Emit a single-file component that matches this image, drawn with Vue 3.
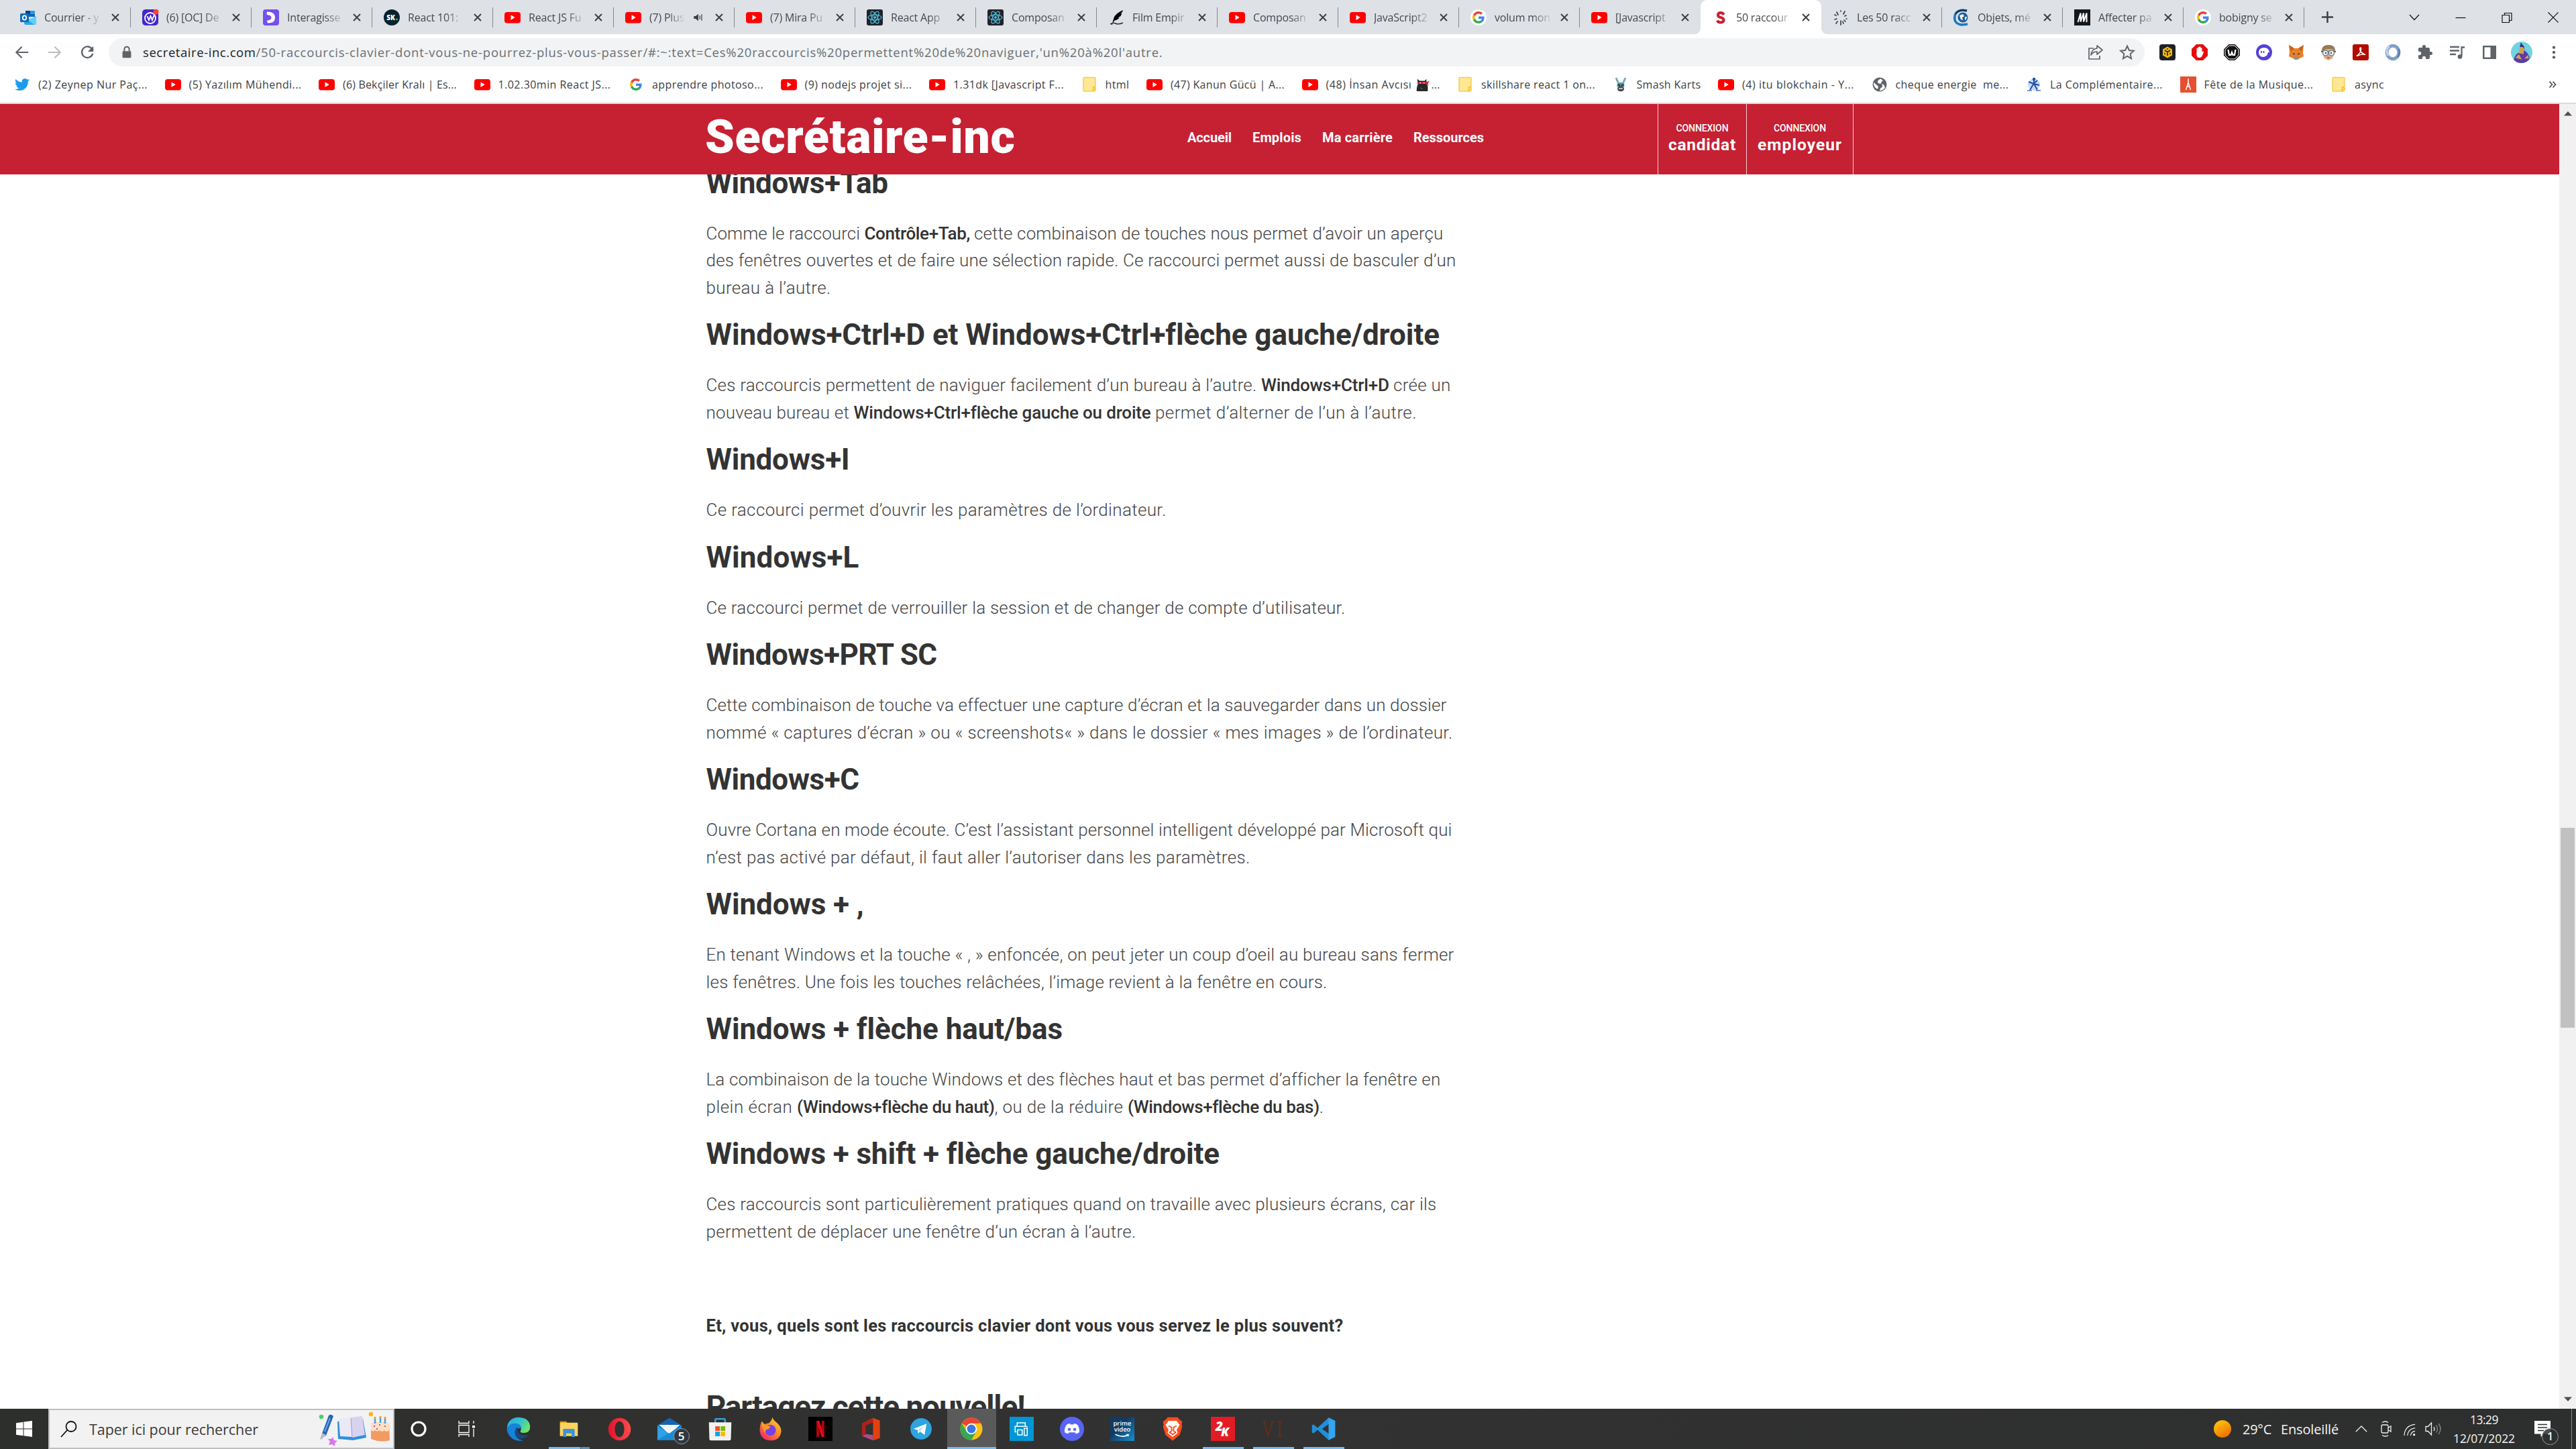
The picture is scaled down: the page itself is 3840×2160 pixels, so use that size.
<script setup>
// Stretches or tightens the tracking of a run of text to a given width.
const vFit = {
  mounted(el, { value }) {
    if (!value) return
    const natural = el.getBoundingClientRect().width
    const count = [...el.textContent].length
    el.style.letterSpacing = (value - natural) / count + 'px'
  },
}

const icons = {
  yt: '<rect y="4" width="24" height="16.5" rx="4" fill="#f00"/><path d="M9.5 8.3v7.6l6.2-3.8z" fill="#fff"/>',
  outlook: '<path d="M8 2h14v9H8z" fill="#1066b5"/><path d="M8 2h7v5H8z" fill="#0a3f86"/><path d="M15 2h7v5h-7z" fill="#2a9be4"/><path d="M6 10l9 5 9-5v10q0 3-3 3H9q-3 0-3-3z" fill="#28a8ea"/><path d="M24 10v10q0 3-3 3l-9-7z" fill="#5fd0f7"/><rect y="6" width="13" height="13" rx="1.5" fill="#0f6cbd"/><ellipse cx="6.5" cy="12.5" rx="2.7" ry="3.2" fill="none" stroke="#fff" stroke-width="1.8"/>',
  oc: '<rect width="24" height="24" rx="5" fill="#4527c9"/><circle cx="12" cy="13" r="8" fill="none" stroke="#fff" stroke-width="1.8"/><path d="M7.500 10l2.500 6 2.500-6 2.500 6 2.500-7" fill="none" stroke="#fff" stroke-width="1.900"/><circle cx="20.500" cy="3.800" r="4" fill="#f7453c"/>',
  inter: '<rect width="24" height="24" rx="4" fill="#7451eb"/><path d="M6 3.500q12 0 12 9 0 8-11 8l-1-4q6 0 6.500-4 0-3.500-4-4-2.500 0-3-1.500z" fill="#fff"/>',
  sk: '<circle cx="12" cy="12" r="12" fill="#06222f"/><text x="10.500" y="15.800" font-size="10" font-weight="800" font-family="Open Sans" fill="#fff" text-anchor="middle">SK</text><circle cx="19.500" cy="14.800" r="1.400" fill="#1fd07a"/>',
  react: '<rect width="24" height="24" rx="3" fill="#20232a"/><g fill="none" stroke="#53c1de" stroke-width="1.200"><ellipse cx="12" cy="12" rx="10" ry="3.900"/><ellipse cx="12" cy="12" rx="10" ry="3.900" transform="rotate(60 12 12)"/><ellipse cx="12" cy="12" rx="10" ry="3.900" transform="rotate(120 12 12)"/></g><circle cx="12" cy="12" r="2" fill="#53c1de"/>',
  quill: '<path d="M22 1q-9 4-13 10l-2.500 8 2-1 1-1.500q5-1 7-4l-2 0 4-2.500 2-4-2 .5q3-2 3.500-5.500z" fill="#000"/><path d="M3 22q4-3 8-1t11-1M8 18l-3 5" fill="none" stroke="#333" stroke-width="1.400"/>',
  google: '<circle cx="12" cy="12" r="12" fill="#fff"/><g transform="translate(3 3) scale(.375)"><path fill="#EA4335" d="M24 9.500c3.540 0 6.710 1.220 9.210 3.600l6.850-6.850C35.900 2.380 30.470 0 24 0 14.620 0 6.510 5.380 2.560 13.220l7.980 6.190C12.430 13.720 17.740 9.500 24 9.500z"/><path fill="#4285F4" d="M46.980 24.550c0-1.570-.15-3.090-.38-4.550H24v9.020h12.940c-.58 2.960-2.260 5.480-4.780 7.180l7.730 6c4.510-4.180 7.090-10.360 7.090-17.650z"/><path fill="#FBBC05" d="M10.530 28.590c-.48-1.450-.76-2.990-.76-4.590s.27-3.140.76-4.590l-7.980-6.190C.92 16.460 0 20.120 0 24c0 3.880.92 7.540 2.560 10.780l7.970-6.190z"/><path fill="#34A853" d="M24 48c6.480 0 11.930-2.130 15.890-5.810l-7.730-6c-2.150 1.450-4.920 2.300-8.160 2.300-6.260 0-11.570-4.220-13.470-9.910l-7.980 6.190C6.510 42.620 14.620 48 24 48z"/></g>',
  sletter: '<path d="M17.500 8q-1-3-4.500-3-4 0-4 3.500 0 2.700 4 3.500 4.500 1 4.500 4t-4.500 3.500q-4 0-5-3" fill="none" stroke="#c8202f" stroke-width="4"/>',
  burst: '<g stroke="#36424c" stroke-width="1.700" stroke-linecap="round"><path d="M12 2v1M16 7l2-4M8 8L6 4M18 10l2-1M5 9l-2-1M17 16l2 2M7 18l-2 3M12 17v6M15 18l1 3M3 15l3-1M20 14l1 0"/></g>',
  objets: '<path d="M20 2Q4-1 2 10t10 13l9-1" fill="none" stroke="#1a78c2" stroke-width="3.500"/><path d="M20 2Q8-1 3 7" fill="none" stroke="#163c63" stroke-width="3"/><circle cx="14" cy="12" r="7.500" fill="#1d5f9e"/><path d="M9 9l5-2 2 3-3 2 1 4-3-1zM17 11l3 0-1 4-2 1z" fill="#fff"/>',
  mm: '<rect width="24" height="24" fill="#16161d"/><path d="M5.500 19L9.500 5.500M9.500 5.500v13M9.500 18.500L14 5.500M14 5.500v13M14 18.500L18.500 5.500v13.500" fill="none" stroke="#fff" stroke-width="2"/>',
  twitter: '<path transform="translate(1 1) scale(.92)" fill="#1d9bf0" d="M23.950 4.570a10 10 0 01-2.820.77 4.960 4.960 0 002.160-2.720c-.95.550-2 .950-3.120 1.180a4.920 4.920 0 00-8.380 4.480C7.690 8.090 4.070 6.130 1.640 3.160a4.820 4.820 0 00-.67 2.480c0 1.710.87 3.210 2.190 4.100a4.900 4.900 0 01-2.230-.62v.06a4.920 4.920 0 003.950 4.830 5 5 0 01-2.210.08 4.940 4.940 0 004.600 3.420A9.870 9.870 0 010 19.540a13.990 13.990 0 007.550 2.210c9.050 0 14-7.500 14-13.980 0-.21 0-.42-.02-.63a9.940 9.940 0 002.460-2.550z"/>',
  folder: '<path d="M3 2.500q0-1 1-1h16q1 0 1 1v13h-3.500v6.500H4q-1 0-1-1z" fill="#ffe793" stroke="#f5cf52" stroke-width="1.500"/><path d="M17.500 16h2q1.800 0 1.800 1.500V20q0 2-2 2h-2z" fill="#ffd95c" stroke="#e8be3c"/>',
  smash: '<path d="M5 2l4 9M19 2l-4 9" stroke="#7ba9b4" stroke-width="3"/><ellipse cx="12" cy="13.500" rx="5.500" ry="4.500" fill="#4f8f9c"/><path d="M8 12l3 2M16 12l-3 2" stroke="#222" stroke-width="1.800"/><ellipse cx="12" cy="18.500" rx="5" ry="3.800" fill="#4e4446"/><path d="M9 18h6" stroke="#d9e8ea" stroke-width="1.500"/>',
  globe: '<circle cx="12" cy="12" r="10.500" fill="#5f6368"/><path d="M14 3.500q-5 1-5 4.500 0 3 4 2.500 3 0 3 3t-3 4l-1 4q6-1 8-5-1-4-3-5l-3-1 1-3 2-1zM3 9l4 3 3 3-1 4q-5-2-6-7z" fill="#fff"/>',
  compl: '<circle cx="12" cy="12" r="9" fill="#c9d8f3"/><path d="M12 3v7l5-4M12 10l-6 10M12 11l5 9M4 8l8 3 8 2" stroke="#1c4fa8" stroke-width="1.900" fill="none"/><circle cx="12" cy="4" r="2.200" fill="#1c4fa8"/><path d="M2 21h7M15 21h7" stroke="#4a78c8" stroke-width="1.500"/>',
  eiffel: '<rect width="24" height="24" fill="#e84e31"/><path d="M12 3v6L8.500 20M12 9l3.500 11M10 15h4" stroke="#fff" stroke-width="1.500" fill="none"/>',
  ninja: '<path d="M4 3l4 3h8l3-3v8q3 2 2 12H3q0-8 2-11z" fill="#26272b"/><path d="M5 8h14l5-2-3 5 2 3-5-3H5z" fill="#d8202c"/><path d="M8 9.500h2M14 9.500h2" stroke="#fff" stroke-width="1.300"/><path d="M9 17l4 3" stroke="#777"/>',
  back: '<path d="M22 12H3M11.500 3L2.500 12l9 9" fill="none" stroke="#5f6368" stroke-width="2.300"/>',
  fwd: '<path d="M2 12h19M12.500 3l9 9-9 9" fill="none" stroke="#babcbe" stroke-width="2.300"/>',
  reload: '<path d="M20 7A9 9 0 1 0 21 14" fill="none" stroke="#5f6368" stroke-width="2.500"/><path d="M22 2v9h-9z" fill="#5f6368"/>',
  lock: '<rect x="5" y="10" width="14" height="11" rx="1.500" fill="#5f6368"/><path d="M8 10V7a4 4 0 0 1 8 0v3" fill="none" stroke="#5f6368" stroke-width="2.200"/>',
  share: '<path d="M10 6H3v16h16v-5" fill="none" stroke="#5f6368" stroke-width="1.700"/><path d="M15 2l8 6.500L15 15v-4q-6 0-9 5 1-9 9-10z" fill="none" stroke="#5f6368" stroke-width="1.700" stroke-linejoin="round"/>',
  star: '<path d="M12 2.500l2.900 6.500 7 .7-5.300 4.700 1.500 6.900L12 17.700l-6.100 3.600 1.500-6.900L2.100 9.700l7-.7z" fill="none" stroke="#5f6368" stroke-width="1.900"/>',
  bnb: '<rect width="24" height="24" rx="4" fill="#1e2026"/><path d="M12 3.500l7 4v9l-7 4-7-4v-9z" fill="#f0b90b"/><path d="M8 9l4 2.500L16 9M12 11.500V17M8 13v2M16 13v2M12 6v2" stroke="#1e2026" stroke-width="1.600" fill="none"/>',
  adblock: '<path d="M7 0h10l7 7v10l-7 7H7l-7-7V7z" fill="#e40d0d"/><path d="M7.500 12V6.500q1-1.500 2 0V4.500q1-1.500 2 0V4q1-1.500 2 0v2q1-1.500 2 0v6l1-1.500q1.500-.5 1.500 1L15.500 18q-1 2-4 2-4 0-4-4z" fill="#fff"/>',
  ww: '<path d="M7.500 0h9L24 7.500v9L16.500 24h-9L0 16.500v-9z" fill="#111"/><path d="M8 2h8l6 6v8l-6 6H8l-6-6V8z" fill="none" stroke="#fff" stroke-width="1"/><path d="M6.500 8l1.500 8h2.500L12 12l1.500 4H16l1.500-8" fill="none" stroke="#fff" stroke-width="2.200"/>',
  phantom: '<circle cx="12" cy="12" r="12" fill="#5340d8"/><path d="M4 13q0-8 8-8 7 0 8 7h-2q-1 7-8 7-6-1-6-6z" fill="#fff"/><path d="M8 10v3M11.500 10v3" stroke="#5340d8" stroke-width="1.800"/>',
  fox: '<path d="M1 1l8 5h6l8-5-1 11 1 6-6 3-3 2h-4l-3-2-6-3 1-6z" fill="#ea8024"/><path d="M1 1l8 5-5 5zM23 1l-8 5 5 5z" fill="#c5641f"/><path d="M8 20l2-2h4l2 2-2 3h-4z" fill="#8f9097"/><path d="M6 13l4 1-1 2zM18 13l-4 1 1 2z" fill="#233447"/>',
  tintin: '<path d="M3 14Q1 2 12 1q11 1 9 13l-3 7-6 3-6-3z" fill="#dfa98a"/><path d="M2 12Q1 1 12 1t10 11l-4-5H8z" fill="#9a7852"/><path d="M1 11h22" stroke="#53656b" stroke-width="2"/><circle cx="7.500" cy="13" r="4" fill="#e8f2f4" stroke="#6d868e" stroke-width="1.500"/><circle cx="16.500" cy="13" r="4" fill="#e8f2f4" stroke="#6d868e" stroke-width="1.500"/><circle cx="8" cy="13" r="1.200" fill="#35525e"/><circle cx="16" cy="13" r="1.200" fill="#35525e"/><path d="M10 20h4" stroke="#a7483e" stroke-width="1.500"/>',
  pdf: '<rect width="24" height="24" rx="3" fill="#b30b00"/><path d="M12 5q-1.500 0-1 3 1 5 8 7.500-5-1.500-13 2 6-4 6.500-10 .5-2-.5-2.500z" fill="none" stroke="#fff" stroke-width="1.600"/>',
  ring: '<ellipse cx="12" cy="12" rx="9" ry="9.800" fill="none" stroke="#7f9fc9" stroke-width="5"/><path d="M5 17Q0 8 7 3" fill="none" stroke="#c3d4ea" stroke-width="3"/><path d="M19 19q4-5 2-12" fill="none" stroke="#5779ae" stroke-width="2"/>',
  puzzle: '<path d="M20.500 11H19V7q0-2-2-2h-4V3.500a2.500 2.500 0 0 0-5 0V5H4Q2 5 2 7v3.800h1.500a2.700 2.700 0 0 1 0 5.400H2V20q0 2 2 2h3.800v-1.500a2.700 2.700 0 0 1 5.400 0V22H17q2 0 2-2v-4h1.500a2.500 2.500 0 0 0 0-5z" fill="#5f6368"/>',
  queue: '<path d="M1 4h14M1 9.500h14M1 15h9" stroke="#5f6368" stroke-width="2.300"/><path d="M23 4.500h-4.500V18" fill="none" stroke="#5f6368" stroke-width="2.300"/><circle cx="16" cy="18.500" r="3.300" fill="#5f6368"/>',
  panel: '<path d="M2 2h20v20H2zM4.500 4.500v15h9v-15z" fill="#5f6368" fill-rule="evenodd"/>',
  avatar: '<circle cx="12" cy="12" r="12" fill="#6fd3e0"/><path d="M3 20q2-7 7-8l2-8q4 1 3 6 5 3 6 9-3 5-9 5t-9-4z" fill="#5b3da8"/><path d="M9 7q3-3 6 1l-1 6-5-1zM5 18l4-4 3 6zM15 19l4-4 1 4z" fill="#d8a04c"/><path d="M11 1l4 5-5 0z" fill="#3b2a78"/>',
  dots: '<g fill="#5f6368"><circle cx="12" cy="4" r="2.400"/><circle cx="12" cy="12" r="2.400"/><circle cx="12" cy="20" r="2.400"/></g>',
  sound: '<path d="M2 9h4l6-5v16l-6-5H2z" fill="#3c4043"/><path d="M15.500 8v8M19.500 5v14" stroke="#3c4043" stroke-width="1.800"/>',
  edge: '<defs><linearGradient id="eg" x1="0" y1="0" x2="1" y2=".5"><stop offset="0" stop-color="#2ba4ea"/><stop offset=".6" stop-color="#35c7c8"/><stop offset="1" stop-color="#6be36b"/></linearGradient></defs><path d="M.5 12Q1 1 12 .5 23 1 23.500 10q0 6-6.500 6-4 0-3-2 2-5-3-6-7-1-10.500 4z" fill="url(#eg)"/><path d="M.5 12Q3 6 9 6.500q6 .5 5.500 5-6-1-6 5 1 6 8 7Q10 25 5 21 .5 17 .5 12z" fill="#1583d8"/><path d="M10 10.500q-4 6 1 10 6 3 11-3-4 2-8 0t-2.500-6z" fill="#114a8b"/>',
  explorer: '<path d="M2 3.500h7l2 2.500H2z" fill="#d69a00"/><path d="M2 6l1-1h18q1 0 1 1v14H2z" fill="#ffd35c"/><path d="M5.500 13q0-1 1-1h11q1 0 1 1v8H15v-4H9v4H5.500z" fill="#3a94d8"/>',
  opera: '<defs><linearGradient id="og" x1="0" x2="1"><stop stop-color="#e3122a"/><stop offset="1" stop-color="#ff4b4b"/></linearGradient></defs><path d="M12 .5a11.500 11.500 0 1 0 0 23 11.500 11.500 0 1 0 0-23zM12 4c3 0 4.800 3.500 4.800 8S15 20 12 20s-4.800-3.500-4.800-8S9 4 12 4z" fill="url(#og)" fill-rule="evenodd"/>',
  mail: '<path d="M0 8.500L12 1l12 7.500V23H0z" fill="#1464b4"/><path d="M2 8h20L12 18z" fill="#f5f5f5"/><path d="M0 8.500L12 17l12-8.500V23H0z" fill="#2ba3e6"/><path d="M0 23L24 8.500V23z" fill="#1b8ad8"/><path d="M1.500 8h21L12 16.500z" fill="#f4f4f6"/>',
  store: '<path d="M7 6V2.500Q7 1.500 8 1.500h8q1 0 1 1V6" fill="none" stroke="#34a9e6" stroke-width="1.600"/><path d="M.5 5h23l-.5 17q0 1.500-2 1.500H3q-2 0-2-1.500z" fill="#f1f1f1"/><path d="M7 9h4.700v4.700H7z" fill="#f25022"/><path d="M12.500 9h4.700v4.700h-4.700z" fill="#7fba00"/><path d="M7 14.500h4.700v4.700H7z" fill="#00a4ef"/><path d="M12.500 14.500h4.700v4.700h-4.700z" fill="#ffb900"/>',
  firefox: '<defs><linearGradient id="fg" x1="1" y1="0" x2=".2" y2="1"><stop stop-color="#ffe226"/><stop offset=".5" stop-color="#ff8a2a"/><stop offset="1" stop-color="#f0246c"/></linearGradient></defs><path d="M14 0q1 3 4 5 5 4 5 9-1 9.500-11 9.500T1 13Q1 8 3 4l3 3q2-1 4-1 3-2 4-6z" fill="url(#fg)"/><circle cx="12" cy="13" r="5.500" fill="#7542e5"/><path d="M3 4l4 4 5 1-2 3q-4 0-3 4-4-3-4-12z" fill="#ff9a2e"/>',
  netflix: '<rect width="24" height="24" fill="#000"/><path d="M8 4h2.800v16H8zM13.200 4H16v16h-2.800z" fill="#a90610"/><path d="M8 4h2.800L16 20h-2.800z" fill="#e50914"/>',
  office: '<path d="M14 .5l7 2.500v18l-7 2.500V5l-8 3v9l-3 2V6z" fill="#e2410f"/><path d="M3 6l11-5v4L6.500 8v9L3 19z" fill="#b01f1a"/><path d="M3 19l4-2 7 1v5.500z" fill="#b14a8a"/>',
  telegram: '<circle cx="12" cy="12" r="10.600" fill="#2ca5e0"/><path d="M4.500 12L17.500 6.800 15.500 18l-4.500-3.300-2 2-.3-3.500z" fill="#fff"/><path d="M9 13.300l6-4.300-4 5.500z" fill="#b9dcf0"/>',
  chrome: '<circle cx="12" cy="12" r="11" fill="#fbc116"/><path d="M12 12L2.500 6.500A11 11 0 0 1 21.500 6.500H12z" fill="#ea4335"/><path d="M2.500 6.500A11 11 0 0 0 12 23l5-8.500H12L7 14z" fill="#34a853"/><circle cx="12" cy="12" r="5.500" fill="#fff"/><circle cx="12" cy="12" r="4.300" fill="#3b78e7"/>',
  hp: '<rect width="24" height="24" fill="#0096d6"/><path d="M7.500 9V6h8v3M7 15H5.500V9.500h11q1 0 1 1M8 13h4.500v5H8zM14.500 11.500h3v7h-3z" fill="none" stroke="#fff" stroke-width="1"/>',
  discord: '<circle cx="12" cy="12" r="12" fill="#5865f2"/><path d="M6.500 8q2-1.200 3.500-1.300l.5.900h3l.5-.9q1.500.1 3.500 1.300 2.300 3.800 1.800 7.400-1.300 1.300-3.500 1.500l-1-1.400H9.200l-1 1.400q-2.200-.2-3.500-1.500Q4.200 11.800 6.500 8z" fill="#fff"/><circle cx="9.300" cy="12.500" r="1.500" fill="#5865f2"/><circle cx="14.700" cy="12.500" r="1.500" fill="#5865f2"/>',
  prime: '<defs><linearGradient id="pg" x1="0" y1="0" x2="1" y2="1"><stop offset=".4" stop-color="#123a63"/><stop offset="1" stop-color="#1391d2"/></linearGradient></defs><rect width="24" height="24" fill="url(#pg)"/><g font-family="Open Sans" font-weight="600" fill="#fff" font-size="6.300" text-anchor="middle"><text x="12" y="8.600">prime</text><text x="12" y="14.600">video</text></g><path d="M5 17.500q7 3.500 13 .5l-.5 1.500M18 18l-2-.5" fill="none" stroke="#fff" stroke-width="1.100"/>',
  brave: '<path d="M7 .5h10l2 2.500 2.500 1.500L21 8l.5 2-2.500 8-7 5.800L5 18 2.500 10 3 8l-.5-3.500L5 3z" fill="#fb4d1f"/><path d="M8 4h8l3 4-3 5 1 3-5 4-5-4 1-3-3-5z" fill="#fff"/><path d="M8 9l3 1.500V14l-2 1.500 3 2 3-2-2-1.500v-3.500L16 9" fill="none" stroke="#fb4d1f" stroke-width="1.300"/>',
  twok: '<rect width="24" height="24" fill="#e31b23"/><g fill="#fff" font-family="Open Sans" font-weight="800" font-style="italic"><text x="4.500" y="14" font-size="13">2</text><text x="10" y="19" font-size="12">K</text></g>',
  vi: '<path d="M3 5l4 14L11 5M18.500 5v14M16.500 5h4M16.500 19h4M1.500 5h3M10 5h3" fill="none" stroke="#6c2c12" stroke-width="1.200"/>',
  vscode: '<path d="M17 .8L23.500 4v16L17 23.200 6 13 2 16.500.5 15.500V8.500L2 7.500 6 11zM17.500 7L10.500 12l7 5z" fill="#1f8fdc" fill-rule="evenodd"/><path d="M17 .8L23.500 4v16L17 23.200z" fill="#34a5ee"/>',
}

const tabs = [
  ['outlook', 'Courrier - y'], ['oc', '(6) [OC] De'], ['inter', 'Interagisse'], ['sk', 'React 101:'],
  ['yt', 'React JS Fu'], ['yt', '(7) Plus', 'sound'], ['yt', '(7) Mira Pu'], ['react', 'React App'],
  ['react', 'Composan'], ['quill', 'Film Empir'], ['yt', 'Composan'], ['yt', 'JavaScript2'],
  ['google', 'volum mon'], ['yt', '[Javascript '], ['sletter', '50 raccour'], ['burst', 'Les 50 racc'],
  ['objets', 'Objets, mé'], ['mm', 'Affecter pa'], ['google', 'bobigny se'],
]
const activeTab = 14

const extensions = ['bnb', 'adblock', 'ww', 'phantom', 'fox', 'tintin', 'pdf', 'ring', 'puzzle', 'queue', 'panel', 'avatar', 'dots']

const bookmarks = [
  ['twitter', '(2) Zeynep Nur Paç...', 163], ['yt', '(5) Yazılım Mühendi...', 168], ['yt', '(6) Bekçiler Kralı | Es...', 170],
  ['yt', '1.02.30min React JS...', 168], ['google', 'apprendre photoso...', 166], ['yt', '(9) nodejs projet si...', 160],
  ['yt', '1.31dk [Javascript F...', 165], ['folder', 'html', 36], ['yt', '(47) Kanun Gücü | A...', 170],
  ['yt', '(48) İnsan Avcısı', 128, 'ninja'], ['folder', 'skillshare react 1 on...', 170], ['smash', 'Smash Karts', 96],
  ['yt', '(4) itu blokchain - Y...', 167], ['globe', 'cheque energie  me...', 169], ['compl', 'La Complémentaire...', 168],
  ['eiffel', 'Fête de la Musique...', 163], ['folder', 'async', 44],
]

const nav = [['Accueil', 66], ['Emplois', 73], ['Ma carrière', 105], ['Ressources', 105]]

// Each line is a list of [text, width, strong] runs.
const sections = [
  { title: 'Windows+Tab', w: 271, lines: [
    [['Comme le raccourci ', 236], ['Contrôle+Tab, ', 163.5, true], ['cette combinaison de touches nous permet d’avoir un aperçu', 699.5]],
    [['des fenêtres ouvertes et de faire une sélection rapide. Ce raccourci permet aussi de basculer d’un', 1118]],
    [['bureau à l’autre.', 186]]] },
  { title: 'Windows+Ctrl+D et Windows+Ctrl+flèche gauche/droite', w: 1093, lines: [
    [['Ces raccourcis permettent de naviguer facilement d’un bureau à l’autre. ', 827.5], ['Windows+Ctrl+D ', 197, true], ['crée un', 85.5]],
    [['nouveau bureau et ', 220], ['Windows+Ctrl+flèche gauche ou droite ', 449, true], ['permet d’alterner de l’un à l’autre.', 390]]] },
  { title: 'Windows+I', w: 214, lines: [[['Ce raccourci permet d’ouvrir les paramètres de l’ordinateur.', 686]]] },
  { title: 'Windows+L', w: 228, lines: [[['Ce raccourci permet de verrouiller la session et de changer de compte d’utilisateur.', 953]]] },
  { title: 'Windows+PRT SC', w: 344, lines: [
    [['Cette combinaison de touche va effectuer une capture d’écran et la sauvegarder dans un dossier', 1104]],
    [['nommé « captures d’écran » ou « screenshots« » dans le dossier « mes images » de l’ordinateur.', 1113]]] },
  { title: 'Windows+C', w: 228, lines: [
    [['Ouvre Cortana en mode écoute. C’est l’assistant personnel intelligent développé par Microsoft qui', 1112]],
    [['n’est pas activé par défaut, il faut aller l’autoriser dans les paramètres.', 811]]] },
  { title: 'Windows + ,', w: 235, lines: [
    [['En tenant Windows et la touche « , » enfoncée, on peut jeter un coup d’oeil au bureau sans fermer', 1115]],
    [['les fenêtres. Une fois les touches relâchées, l’image revient à la fenêtre en cours.', 926]]] },
  { title: 'Windows + flèche haut/bas', w: 531, lines: [
    [['La combinaison de la touche Windows et des flèches haut et bas permet d’afficher la fenêtre en', 1093]],
    [['plein écran ', 135.5], ['(Windows+flèche du haut)', 294, true], [', ou de la réduire ', 198.5], ['(Windows+flèche du bas)', 285.5, true], ['.', 6]]] },
  { title: 'Windows + shift + flèche gauche/droite', w: 765, lines: [
    [['Ces raccourcis sont particulièrement pratiques quand on travaille avec plusieurs écrans, car ils', 1089]],
    [['permettent de déplacer une fenêtre d’un écran à l’autre.', 641]]] },
]

// [icon, size, state]
const apps = [
  ['edge', 36], ['explorer', 32, 'stack'], ['opera', 35], ['mail', 36, 'unread'], ['store', 35], ['firefox', 35], ['netflix', 36],
  ['office', 35], ['telegram', 36], ['chrome', 36, 'current'], ['hp', 36], ['discord', 36], ['prime', 36], ['brave', 36],
  ['twok', 36, 'open'], ['vi', 36, 'open'], ['vscode', 36, 'open'],
]
</script>

<template>
  <div class="screen">
    <div class="tabstrip">
      <div v-for="(t, i) in tabs" :key="i" class="tab" :class="{ active: i === activeTab, nosep: i === activeTab - 1 || i === activeTab }">
        <svg class="i24" viewBox="0 0 24 24" v-html="icons[t[0]]"></svg>
        <span class="tab-title" :class="{ short: t[2] }">{{ t[1] }}</span>
        <svg v-if="t[2]" class="snd" viewBox="0 0 24 24" v-html="icons[t[2]]"></svg>
        <svg class="close" viewBox="0 0 12 12"><path d="M1 1l10 10M11 1L1 11" /></svg>
      </div>
      <svg class="plus" viewBox="0 0 20 20"><path d="M10 1v18M1 10h18" /></svg>
      <div class="winctl">
        <svg viewBox="0 0 16 16"><path d="M1 4l7 7.500L15 4" /></svg>
        <svg viewBox="0 0 16 16"><path d="M.5 8.500h15" /></svg>
        <svg viewBox="0 0 16 16"><path d="M1 4.500h10.500v11H1zM4.500 4.500v-3H15v11h-3.500" /></svg>
        <svg viewBox="0 0 16 16"><path d="M.5.5l15 15M15.500.5l-15 15" /></svg>
      </div>
    </div>

    <div class="toolbar">
      <svg v-for="n in ['back', 'fwd', 'reload']" :key="n" class="nav-btn" viewBox="0 0 24 24" v-html="icons[n]"></svg>
      <div class="omnibox">
        <svg class="lock" viewBox="0 0 24 24" v-html="icons.lock"></svg>
        <span v-fit="168.500" class="domain">secretaire-inc.com</span>
        <span v-fit="1352" class="path">/50-raccourcis-clavier-dont-vous-ne-pourrez-plus-vous-passer/#:~:text=Ces%20raccourcis%20permettent%20de%20naviguer,'un%20à%20l'autre.</span>
        <svg class="i24 share" viewBox="0 0 24 24" v-html="icons.share"></svg>
        <svg class="i24" viewBox="0 0 24 24" v-html="icons.star"></svg>
      </div>
      <div class="exts">
        <svg v-for="n in extensions" :key="n" :class="['ext', n]" viewBox="0 0 24 24" v-html="icons[n]"></svg>
      </div>
    </div>

    <div class="bookmarks">
      <div v-for="(b, i) in bookmarks" :key="i" class="bm">
        <svg class="i24" viewBox="0 0 24 24" v-html="icons[b[0]]"></svg>
        <span v-fit="b[2]">{{ b[1] }}</span>
        <template v-if="b[3]">
          <svg class="emoji" viewBox="0 0 24 24" v-html="icons[b[3]]"></svg><span v-fit="13">...</span>
        </template>
      </div>
      <svg class="more" viewBox="0 0 12 12"><path d="M1.500 1.500L5.500 6l-4 4.500M6.500 1.500l4 4.500-4 4.500" /></svg>
    </div>

    <div class="page">
      <div class="view">
        <header>
          <span v-fit="470" class="logo">Secrétaire-inc</span>
          <nav><span v-for="n in nav" :key="n[0]" v-fit="n[1]">{{ n[0] }}</span></nav>
          <div class="login first"><small v-fit="78">CONNEXION</small><b v-fit="101">candidat</b></div>
          <div class="login second"><small v-fit="78">CONNEXION</small><b v-fit="126">employeur</b></div>
        </header>
        <main>
          <section v-for="s in sections" :key="s.title">
            <h2><span v-fit="s.w">{{ s.title }}</span></h2>
            <p v-for="(line, i) in s.lines" :key="i"><span v-for="(r, j) in line" :key="j" v-fit="r[1]" :class="{ strong: r[2] }">{{ r[0] }}</span></p>
          </section>
          <p class="question"><span v-fit="950">Et, vous, quels sont les raccourcis clavier dont vous vous servez le plus souvent?</span></p>
          <h2 class="share-title"><span v-fit="475">Partagez cette nouvelle!</span></h2>
        </main>
      </div>
      <div class="scrollbar">
        <svg viewBox="0 0 12 8"><path d="M0 7.500L6 1l6 6.500z" /></svg>
        <div class="thumb"></div>
        <svg class="down" viewBox="0 0 12 8"><path d="M0 .5L6 7l6-6.500z" /></svg>
      </div>
    </div>

    <div class="taskbar">
      <div class="start"><svg viewBox="0 0 24 24"><path d="M0 3.300l10.500-1.500v9.700H0zM11.500 1.600L24 0v11.500H11.500zM0 12.500h10.500v9.700L0 20.700zM11.500 12.500H24V24l-12.500-1.700z" /></svg></div>
      <div class="search">
        <svg class="glass" viewBox="0 0 25 25"><circle cx="16" cy="8.500" r="7.500" /><path d="M10.500 13.500L1 24" /></svg>
        <span v-fit="252">Taper ici pour rechercher</span>
        <svg class="decor" viewBox="0 0 108 52">
          <circle cx="4" cy="8" r="3.300" fill="#4ad071" /><circle cx="78" cy="4" r="3.300" fill="#ffb31a" />
          <path d="M15 6q3-3 7 1L11 36l-5 2-1-5z" fill="#2766b8" /><path d="M5 32l6 3-6 6-3 1z" fill="#b9bcc8" /><path d="M17 10l-8 20" stroke="#6ea5e6" stroke-width="2" />
          <path d="M28 15l38-4 5 28-20 4-22-2z" fill="#2f8fe0" /><path d="M30 11l18-2 2 29-18-1z" fill="#ece9f7" /><path d="M48 9l17-2 4 28-19 4z" fill="#d9d2ef" /><path d="M48 10l2 29" stroke="#a79cc9" />
          <path d="M21 38l2 5 5 1-4 3 0 5-4-3-5 1 2-5-3-4 5 0z" fill="#dd71f3" />
          <path d="M78 18q13-4 27 0l1 25q-14 4-28-2z" fill="#f39a63" /><path d="M78 18q13-4 27 0v10q-4 4-7 0-4 4-7 0-4 3-7 0-3 3-6 0z" fill="#fce0c0" />
          <path d="M84 18v-7M92 17v-7M99 18v-7" stroke="#3ca4e8" stroke-width="2.500" /><path d="M84 11V8M92 10V7M99 11V8" stroke="#ff9c2a" stroke-width="3" />
          <path d="M82 22h2M90 20h2M98 22h2M86 26h2" stroke="#b04bd0" stroke-width="2" />
        </svg>
      </div>
      <div class="sys"><svg class="i24" viewBox="0 0 24 24"><circle cx="12" cy="12" r="10" fill="none" stroke="#fff" stroke-width="3.200" /></svg></div>
      <div class="sys tv"><svg class="tview" viewBox="0 0 26 24"><path d="M1 0v3.500h15V0M1 24v-3.500h15V24M1 6.500h15v11H1zM23 0v4M23 12v12" /><path d="M21 7h4v3.500h-4z" class="fill" /></svg></div>
      <div v-for="a in apps" :key="a[0]" class="app" :class="a[2]">
        <svg :style="{ width: a[1] + 'px', height: a[1] + 'px' }" viewBox="0 0 24 24" v-html="icons[a[0]]"></svg>
        <span v-if="a[2] === 'unread'" class="count">5</span>
      </div>
      <div class="tray">
        <div class="sun"></div>
        <span v-fit="43" class="temp">29°C</span>
        <span v-fit="86" class="cond">Ensoleillé</span>
        <svg class="chev" viewBox="0 0 18 10"><path d="M.8 9.300L9 1l8.200 8.300" /></svg>
        <svg class="cam" viewBox="0 0 22 24"><rect x="4" y="6" width="10" height="12" rx="2" /><path d="M14 10.500l4-2.500v8l-4-2.500M5 2.500q5-3 9 0M5 21.500q5 3 9 0" /></svg>
        <svg class="wifi" viewBox="0 0 20 20"><path d="M1 19Q2 3 18 1.500M6 19q.5-10 12-12M11 19q.5-6 7-7" /><circle cx="16.500" cy="17.500" r="1.700" /></svg>
        <svg class="spk" viewBox="0 0 24 24"><path d="M1 8.500h3.500L9.500 3v18l-5-5.500H1z" /><path d="M13 9q2 3 0 6" /><path d="M16.500 6.500q4 5.500 0 11M20 4q6 8 0 16" class="dim" /></svg>
        <div class="clock"><span v-fit="42">13:29</span><span v-fit="92">12/07/2022</span></div>
        <div class="notif">
          <svg viewBox="0 0 24 24"><path d="M0 0h24v19.500H14L9.500 24v-4.500H0z" fill="#fff" /><path d="M5 5.500h14M5 10h14M5 14.500h9" stroke="#2e2e2e" stroke-width="1.300" /></svg>
          <span class="ncount">1</span>
        </div>
        <div class="peek"></div>
      </div>
    </div>
  </div>
</template>

<style>
body { margin: 0; background: #fff; overflow: hidden; }
</style>

<style scoped>
.screen { width: 3840px; height: 2160px; display: flex; flex-direction: column; overflow: hidden; background: #fff; font-family: "Open Sans", sans-serif; }
svg { display: block; flex: none; overflow: visible; }
span { white-space: pre; flex: none; }
.i24 { width: 24px; height: 24px; }

.tabstrip { height: 51px; flex: none; display: flex; align-items: center; background: #dee1e6; padding-left: 15px; color: #45494d; font-size: 16px; box-sizing: border-box; }
.tab { width: 180px; height: 51px; box-sizing: border-box; display: flex; align-items: center; padding-left: 17px; position: relative; }
.tab:first-child { padding-left: 15px; }
.tab::after { content: ""; position: absolute; right: 0; top: 11px; width: 1px; height: 30px; background: #85888c; }
.tab.nosep::after { display: none; }
.tab.active { background: #fff; border-radius: 10px 10px 0 0; }
.tab.active::before { content: ""; position: absolute; left: -10px; right: -10px; bottom: 0; height: 10px; background: radial-gradient(circle at 0 0, transparent 10px, #fff 10.500px) left / 10px 10px no-repeat, radial-gradient(circle at 100% 0, transparent 10px, #fff 10.500px) right / 10px 10px no-repeat; }
.tab-title { width: 84px; margin-left: 12px; overflow: hidden; line-height: 24px; letter-spacing: -0.200px; -webkit-mask-image: linear-gradient(90deg, #000 56px, transparent 86px); mask-image: linear-gradient(90deg, #000 56px, transparent 86px); }
.tab-title.short { width: 54px; -webkit-mask-image: linear-gradient(90deg, #000 28px, transparent 54px); mask-image: linear-gradient(90deg, #000 28px, transparent 54px); }
.snd { width: 16px; height: 16px; margin: 0 3px 0 11px; }
.close { width: 12px; height: 12px; margin-left: 14px; stroke: #3c4043; stroke-width: 2; fill: none; }
.snd + .close { margin-left: 14px; }
.tab:first-child .close { margin-left: 16px; }
.plus { width: 19px; height: 19px; margin-left: 25px; stroke: #3c4043; stroke-width: 2.600; }
.winctl { margin-left: auto; margin-right: 26px; display: flex; gap: 53px; }
.winctl svg { width: 16px; height: 16px; stroke: #111; stroke-width: 1.200; fill: none; }

.toolbar { height: 54px; flex: none; display: flex; align-items: center; padding: 0 0 0 21.500px; }
.nav-btn { width: 22px; height: 22px; margin-right: 26.500px; }
.omnibox { width: 3035px; height: 42px; margin-left: -5px; border-radius: 21px; background: #f1f3f4; display: flex; align-items: center; box-sizing: border-box; padding: 0 14px 0 16px; font-size: 18.500px; color: #6b6f73; }
.omnibox span { margin-top: -1px; }
.lock { width: 22px; height: 22px; margin-right: 13px; }
.domain { color: #202124; }
.share { margin: 0 24px 0 auto; }
.exts { display: flex; align-items: center; gap: 24px; margin-left: 22px; }
.ext { width: 24px; height: 24px; }
.ext.avatar { width: 32px; height: 32px; margin: 0 -4px; }
.ext.dots { width: 22px; height: 22px; margin-left: 1px; }

.bookmarks { height: 42px; flex: none; display: flex; align-items: center; gap: 25.500px; padding: 0 29px 6px 21px; border-bottom: 2px solid #d9dadb; font-size: 16px; color: #3c4043; }
.bm { display: flex; align-items: center; }
.bm > .i24 { margin-right: 12px; }
.bm > .emoji { width: 22px; height: 22px; margin: 0 3px 0 4px; }
.more { width: 12px; height: 12px; margin-left: auto; stroke: #4a4d51; stroke-width: 1.700; fill: none; }

.page { flex: 1; min-height: 0; display: flex; }
.view { width: 3815px; height: 1945px; display: flex; flex-direction: column; overflow: hidden; font-family: Roboto, sans-serif; color: #333; }
header { height: 105px; flex: none; background: #c62033; display: flex; padding-left: 1051px; color: #fff; position: relative; z-index: 1; }
.logo { font-size: 70px; font-weight: 900; line-height: 82px; margin-top: 8px; width: 461px; }
nav { display: flex; gap: 31px; margin-left: 258px; width: 700px; font-size: 20px; font-weight: 700; line-height: 24px; margin-top: 38px; }
.login { display: flex; flex-direction: column; align-items: center; border-left: 1px solid #f3cdd2; box-sizing: border-box; height: 105px; padding-top: 27px; }
.login.first { width: 132px; margin-left: 1px; }
.login.second { width: 160px; border-right: 1px solid #f3cdd2; }
.login small { font-size: 14px; line-height: 18px; font-weight: 500; }
.login b { font-size: 24.500px; line-height: 30px; font-weight: 700; margin-top: 1px; }
main { padding-left: 1052.500px; margin-top: -14px; flex: 1; }
section { margin-bottom: 23.200px; }
h2 { margin: 0 0 27.800px; font-size: 44px; line-height: 54px; font-weight: 700; }
p { margin: 0; font-size: 26px; line-height: 40.500px; font-weight: 300; white-space: nowrap; height: 40.500px; }
section p { color: #454545; }
p span, h2 span { display: inline-block; }
p .strong { font-weight: 500; color: #333; }
.question { font-weight: 700; font-size: 25.500px; margin-top: 99.500px; }
.share-title { margin-top: 74px; font-size: 46px; }

.scrollbar { width: 25px; height: 1945px; background: #f1f1f1; display: flex; flex-direction: column; align-items: center; box-sizing: border-box; padding: 10px 0; }
.scrollbar svg { width: 12px; height: 8px; fill: #505050; }
.thumb { width: 21px; height: 298px; margin-top: 1061px; background: #c1c1c1; }
.scrollbar .down { margin-top: auto; }

.taskbar { height: 60px; flex: none; display: flex; background: linear-gradient(90deg, #2d2f2c, #323232 50%, #2d2e2e); color: #fff; position: relative; }
.start { width: 72px; display: flex; align-items: center; justify-content: center; }
.start svg { width: 24px; height: 24px; fill: #fff; }
.search { width: 516px; box-sizing: border-box; border: 2px solid #bfbfbf; background: #f2f2f2; display: flex; align-items: center; padding-left: 16px; color: #3a3a3a; font-size: 21.500px; }
.glass { width: 25px; height: 25px; fill: none; stroke: #111; stroke-width: 1.800; margin-right: 18px; }
.decor { width: 108px; height: 52px; margin-left: 90px; }
.sys { width: 72px; display: flex; align-items: center; justify-content: center; }
.sys.tv { margin-right: 3.500px; }
.tview { width: 26px; height: 24px; fill: none; stroke: #fff; stroke-width: 1.300; }
.tview .fill { fill: #fff; stroke: none; }
.app { width: 75px; display: flex; align-items: center; justify-content: center; position: relative; }
.app.current { background: linear-gradient(90deg, #5a5a5a, #5a5a5a) center / 73px 60px no-repeat; }
.app.current::after, .app.open::after, .app.stack::after { content: ""; position: absolute; bottom: 0; left: 7px; width: 61px; height: 3px; background: #76b9ed; }
.app.current::after { left: 1px; width: 73px; }
.app.stack::after { background: linear-gradient(90deg, #76b9ed 47px, #3f5b70 47px, #3f5b70 48px, #5b8db3 48px); }
.count { position: absolute; left: 43px; top: 29px; width: 22px; height: 22px; border: 1px solid #999; border-radius: 50%; background: #2f3a40; text-align: center; font-size: 17px; line-height: 22px; font-weight: 600; }

.tray { margin-left: auto; width: 540px; display: flex; align-items: center; font-size: 20px; color: #f4f4f4; }
.tray svg { fill: none; stroke: #f0f0f0; stroke-width: 1.300; }
.sun { width: 26px; height: 26px; border-radius: 50%; background: linear-gradient(150deg, #ffce0a, #f79a06 50%, #e55c00); }
.temp { margin-left: 17px; }
.cond { margin-left: 14px; }
.chev { width: 18px; height: 10px; margin-left: 25px; }
.cam { width: 22px; height: 24px; margin-left: 17px; }
.wifi { width: 19px; height: 19px; margin-left: 15px; margin-top: 2px; }
.wifi circle { fill: #fff; stroke: none; }
.spk { width: 24px; height: 24px; margin-left: 13px; }
.spk .dim { stroke: #888; }
.clock { width: 94px; margin-left: 17px; display: flex; flex-direction: column; align-items: center; font-size: 17.500px; line-height: 28px; }
.notif { position: relative; margin-left: 28px; width: 24px; height: 24px; }
.notif svg { width: 24px; height: 24px; stroke: none; }
.ncount { position: absolute; left: 11px; top: 11px; width: 23px; height: 23px; border: 1px solid #9a9a9a; border-radius: 50%; background: rgba(46, 46, 46, 0.85); text-align: center; font-size: 16px; line-height: 23px; font-weight: 600; }
.peek { width: 1px; height: 60px; background: #8a8a8a; margin-left: auto; margin-right: 6px; }
</style>
